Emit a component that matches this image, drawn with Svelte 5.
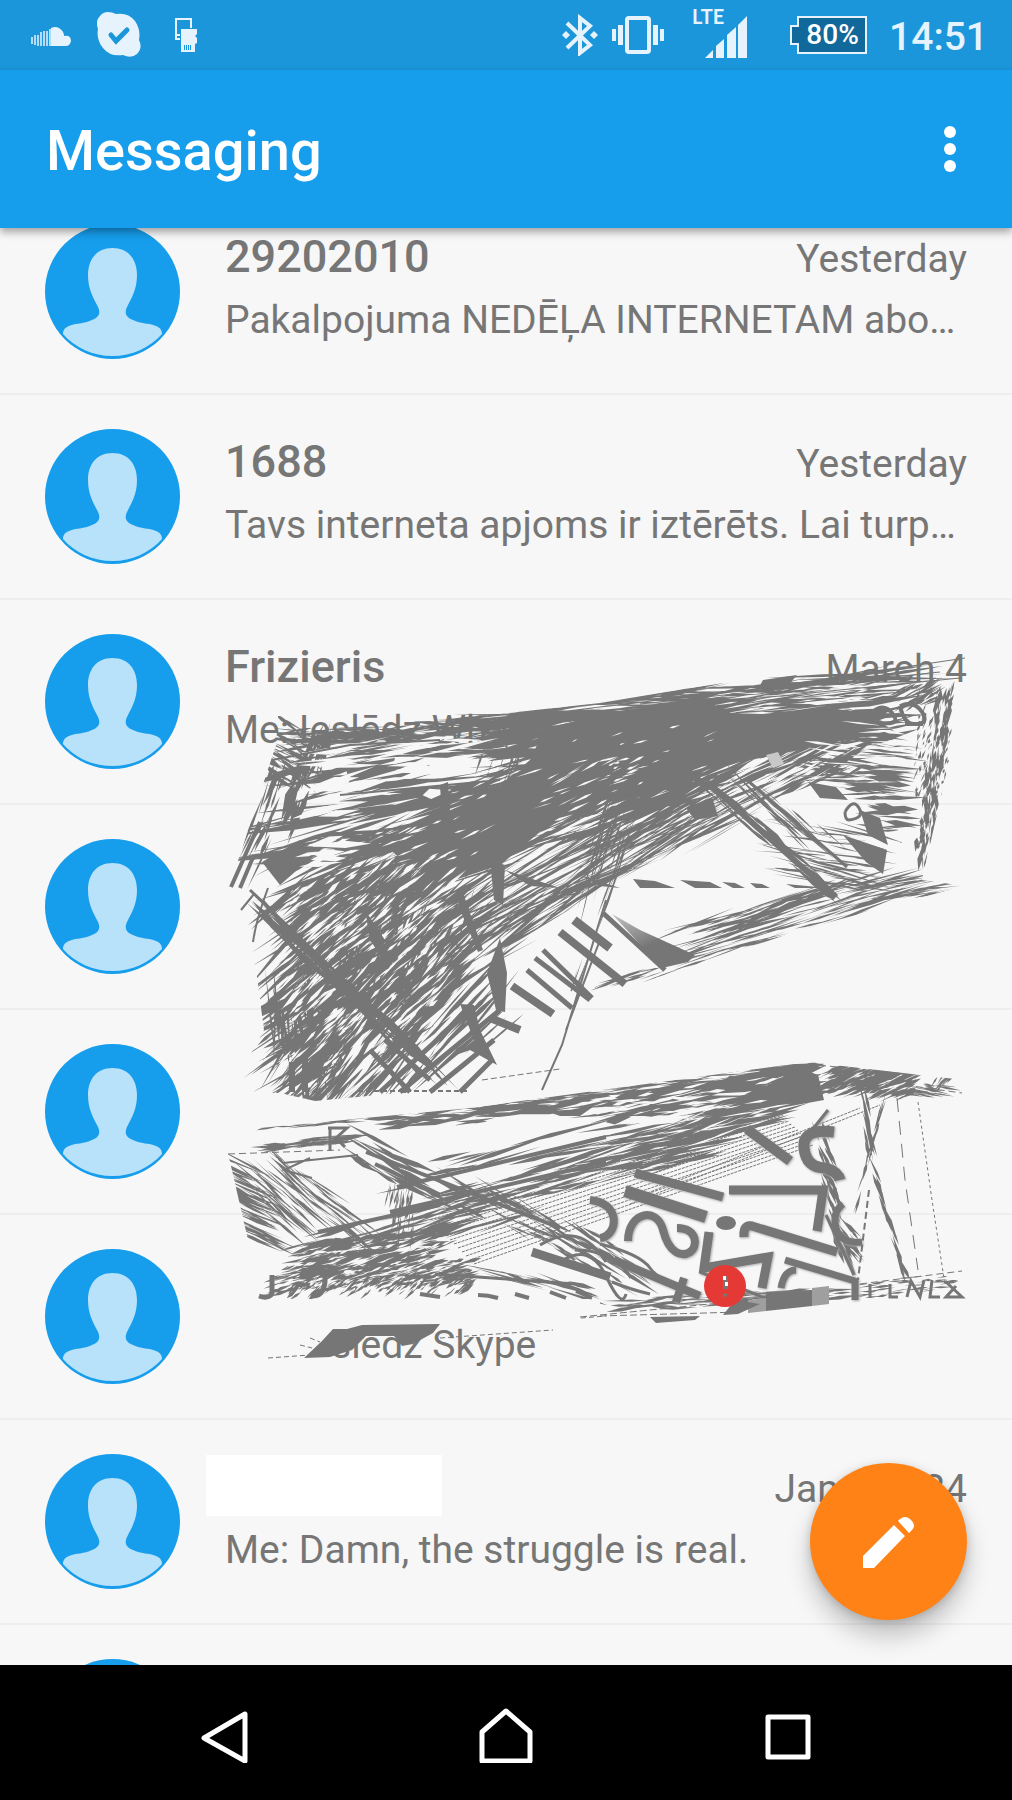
<script lang="ts">
  type Thread = { name?: string; date?: string; preview?: string; cut?: boolean };

  const threads: Thread[] = [
    { name: '29202010', date: 'Yesterday', preview: 'Pakalpojuma NEDĒĻA INTERNETAM abo…' },
    { name: '1688', date: 'Yesterday', preview: 'Tavs interneta apjoms ir iztērēts. Lai turp…' },
    { name: 'Frizieris', date: 'March 4', preview: 'Me: Ieslēdz What' },
    {},
    {},
    { preview: 'slēdz Skype', cut: true },
    { date: 'January 24', preview: 'Me: Damn, the struggle is real.' },
    {},
  ];

  // small seeded generator so the scribble is the same on every load
  function rng(seed: number) {
    return () => {
      seed = (seed * 1664525 + 1013904223) % 4294967296;
      return seed / 4294967296;
    };
  }

  // spine x1,y1,x2,y2 | spread | count | length | angle | thickness
  type Cluster = [number, number, number, number, number, number, number, number, number];

  function slivers(clusters: Cluster[], seed: number, jitter = 8) {
    const r = rng(seed);
    let d = '';
    for (const [x1, y1, x2, y2, spread, n, len, angle, thick] of clusters) {
      const sl = Math.hypot(x2 - x1, y2 - y1) || 1;
      const nx = -(y2 - y1) / sl;
      const ny = (x2 - x1) / sl;
      for (let i = 0; i < n; i++) {
        const t = r();
        const off = (r() - 0.5) * spread;
        const cx = x1 + (x2 - x1) * t + nx * off;
        const cy = y1 + (y2 - y1) * t + ny * off;
        const a = ((angle + (r() - 0.5) * 2 * jitter) * Math.PI) / 180;
        const h = (len * (0.4 + r() * 0.8)) / 2;
        const w = (thick * (0.3 + r())) / 2;
        const dx = Math.cos(a);
        const dy = Math.sin(a);
        const k = (r() - 0.5) * h;
        const pts = [
          [cx - dx * h, cy - dy * h],
          [cx + dx * k - dy * w, cy + dy * k + dx * w],
          [cx + dx * h, cy + dy * h],
          [cx + dx * k + dy * w, cy + dy * k - dx * w],
        ];
        d += 'M' + pts.map((p) => p[0].toFixed(1) + ' ' + p[1].toFixed(1)).join('L') + 'Z';
      }
    }
    return d;
  }

  const upperDark = slivers(
    [
      [285, 738, 480, 728, 14, 70, 60, -2, 3],
      [480, 722, 900, 676, 18, 120, 130, -6, 3],
      [500, 745, 880, 715, 50, 170, 110, -8, 6],
      [300, 750, 520, 740, 26, 30, 110, -6, 4],
      [290, 795, 480, 765, 60, 30, 110, -12, 6],
      [270, 845, 450, 815, 50, 34, 120, -10, 5],
      [440, 830, 700, 765, 80, 240, 110, -22, 5],
      [300, 880, 480, 850, 60, 110, 100, -24, 5],
      [290, 940, 480, 880, 90, 200, 90, -38, 4],
      [285, 1000, 460, 940, 90, 200, 90, -42, 4],
      [275, 1050, 400, 1000, 90, 150, 80, -34, 4],
      [290, 1075, 420, 1040, 60, 150, 80, -52, 4],
      [340, 1050, 480, 1000, 90, 70, 110, -48, 4],
      [470, 910, 690, 820, 50, 90, 150, -28, 2],
      [470, 960, 600, 870, 30, 40, 110, -35, 3],
      [610, 850, 740, 810, 40, 50, 110, -30, 2],
      [700, 790, 860, 750, 45, 70, 80, -26, 4],
      [810, 750, 905, 770, 60, 70, 60, 4, 3],
      [780, 850, 870, 860, 60, 44, 70, 11, 2],
      [870, 770, 890, 830, 30, 30, 40, 4, 5],
      [275, 740, 310, 770, 60, 44, 44, 32, 3],
      [275, 770, 250, 870, 20, 20, 50, -68, 4],
      [300, 770, 290, 830, 20, 16, 50, -66, 6],
      [310, 760, 330, 740, 20, 20, 50, -66, 3],
      [480, 760, 600, 770, 40, 24, 70, -74, 2],
      [350, 980, 440, 900, 90, 60, 90, -72, 4],
      [290, 1000, 320, 1080, 50, 44, 80, 84, 4],
    ],
    11,
  );

  const diagonals = slivers(
    [
      [270, 920, 430, 1070, 16, 40, 90, 44, 5],
      [690, 770, 830, 890, 12, 20, 60, 42, 5],
      [730, 780, 830, 850, 24, 24, 60, 42, 2],
      [620, 790, 600, 900, 30, 24, 110, -73, 2],
      [590, 950, 550, 1060, 10, 8, 80, -71, 2],
    ],
    5,
    4,
  );

  const flap = slivers(
    [
      [690, 940, 900, 880, 30, 70, 80, -18, 2],
      [610, 985, 880, 910, 10, 50, 60, -17, 2],
      [860, 890, 950, 886, 18, 34, 60, -10, 2],
      [730, 930, 820, 890, 12, 30, 60, -22, 3],
    ],
    17,
    5,
  );

  const column = slivers(
    [
      [945, 690, 922, 860, 16, 90, 20, -80, 4],
      [935, 690, 930, 800, 34, 110, 10, -72, 2],
      [952, 680, 920, 870, 4, 26, 20, -80, 2],
      [900, 700, 940, 690, 20, 40, 30, -30, 3],
    ],
    23,
    10,
  );

  const upperLight = slivers(
    [
      [310, 758, 470, 750, 24, 16, 80, -6, 5],
      [320, 800, 440, 775, 40, 16, 70, -12, 8],
      [290, 855, 350, 845, 36, 10, 60, -10, 8],
      [720, 705, 880, 690, 20, 30, 34, -6, 2],
      [560, 770, 720, 750, 60, 30, 14, -20, 2],
      [480, 800, 640, 790, 70, 40, 24, -24, 2],
      [400, 850, 480, 820, 60, 20, 20, -24, 2],
      [290, 930, 460, 880, 80, 90, 30, -38, 3],
      [290, 1000, 450, 960, 90, 90, 26, -44, 3],
      [280, 1060, 400, 1030, 70, 40, 26, -46, 3],
      [350, 1070, 450, 1020, 50, 18, 60, -46, 5],
      [740, 712, 860, 690, 20, 20, 50, -5, 2],
      [690, 790, 820, 770, 40, 34, 40, -24, 2],
      [820, 740, 900, 750, 50, 24, 40, 4, 3],
    ],
    31,
  );

  const lowerDark = slivers(
    [
      [265, 1125, 600, 1093, 10, 70, 60, -6, 2],
      [600, 1092, 800, 1066, 8, 34, 70, -8, 2],
      [370, 1125, 480, 1115, 14, 24, 50, -5, 4],
      [270, 1146, 350, 1138, 8, 26, 50, -6, 3],
      [480, 1112, 600, 1100, 12, 24, 60, -6, 5],
      [600, 1110, 760, 1088, 26, 44, 60, -10, 7],
      [720, 1095, 815, 1080, 30, 50, 50, -14, 8],
      [630, 1145, 770, 1110, 26, 70, 90, -15, 5],
      [390, 1180, 620, 1135, 30, 14, 100, -14, 4],
      [520, 1185, 700, 1140, 36, 54, 100, -15, 4],
      [400, 1215, 600, 1165, 24, 22, 100, -15, 3],
      [330, 1245, 520, 1200, 36, 46, 80, -17, 3],
      [300, 1262, 440, 1245, 36, 170, 36, -14, 4],
      [275, 1280, 470, 1272, 24, 220, 24, -14, 3],
      [290, 1290, 470, 1285, 14, 80, 18, -40, 3],
      [830, 1078, 910, 1085, 26, 200, 26, -22, 3],
      [900, 1090, 950, 1090, 10, 24, 24, 10, 2],
      [935, 1085, 958, 1070, 10, 14, 20, -52, 2],
      [620, 1306, 840, 1292, 12, 46, 60, -4, 3],
      [840, 1294, 950, 1280, 16, 40, 20, -5, 2],
    ],
    41,
    6,
  );

  const lowerDown = slivers(
    [
      [235, 1162, 265, 1245, 14, 70, 60, 25, 2],
      [268, 1170, 300, 1230, 40, 46, 60, 42, 2],
      [300, 1180, 370, 1240, 22, 30, 60, 38, 2],
      [365, 1150, 500, 1215, 30, 34, 60, 28, 4],
      [480, 1200, 600, 1250, 30, 30, 60, 28, 3],
      [560, 1230, 640, 1285, 34, 24, 46, 34, 3],
      [480, 1275, 600, 1292, 14, 16, 60, 16, 3],
      [395, 1180, 410, 1240, 24, 40, 24, 100, 2],
      [820, 1130, 845, 1260, 12, 40, 34, 66, 4],
      [850, 1225, 855, 1260, 10, 14, 30, 48, 4],
      [865, 1095, 870, 1160, 4, 14, 40, 76, 3],
      [872, 1165, 905, 1275, 4, 22, 30, 70, 3],
      [884, 1098, 855, 1210, 3, 16, 30, -75, 2],
    ],
    47,
    6,
  );

  const lowerLight = slivers(
    [
      [560, 1112, 720, 1098, 22, 34, 34, -8, 3],
      [600, 1140, 770, 1112, 30, 40, 40, -15, 2],
      [480, 1190, 680, 1150, 40, 34, 40, -15, 2],
      [290, 1268, 450, 1256, 40, 80, 14, -20, 2],
      [270, 1288, 460, 1284, 14, 50, 10, -40, 2],
    ],
    53,
  );

  // dotted bands that climb to the right
  const bands = Array.from({ length: 12 }, (_, i) => ({
    x1: 430 + i * 4,
    y1: 1220 + i * 4,
    x2: 780 + i * 3,
    y2: 1112 + i * 3,
  }));
</script>

<div class="screen">
  <div class="status-bar">
    <div class="status-left">
      <svg width="42" height="44" viewBox="0 0 42 44" aria-hidden="true">
        <path d="M21 33V15Q25 13 29 15 34 18 34 23 41 22 41 28 40 33 36 33Z" />
        <path
          d="M2 24v7M5 22v10M8 22v11M11 19v14M14 18v15M17 18v15M20 16v17"
          stroke="#b5dcf6"
          stroke-width="2"
        />
      </svg>
      <svg width="44" height="46" viewBox="0 0 44 46" aria-hidden="true">
        <path
          d="M11 0Q15 0 19 2 31 0 38 9 44 18 42 28 46 36 40 42 34 47 26 43 13 45 6 36-1 27 1 17-2 9 3 4 6 0 11 0Z"
        />
        <path d="M14 23l5 6 11-11" fill="none" stroke="#1b96db" stroke-width="5" stroke-linecap="round" />
      </svg>
      <svg width="44" height="36" viewBox="0 0 44 36" aria-hidden="true">
        <path d="M25 11V2H10v20h4M10 18h4" fill="none" stroke="#e6f3fc" stroke-width="2" />
        <path d="M15 12h16v5l-2 2 2 2v5l-2 1v8H15Z" />
        <path d="M18.500 28v5M20.500 28v5M22.500 28v5M24.500 28v5" stroke="#1b96db" />
      </svg>
    </div>

    <div class="status-right">
      <svg width="36" height="42" viewBox="0 0 36 42" aria-hidden="true">
        <path d="M5 9l23 22-10 8V4l10 8L5 34" fill="none" stroke="#e6f3fc" stroke-width="4" />
        <path d="M0 21l4-4 4 4-4 4ZM28 21l4-4 4 4-4 4Z" />
      </svg>
      <svg width="52" height="38" viewBox="0 0 52 38" aria-hidden="true">
        <rect x="15" y="2" width="22" height="34" rx="2" fill="none" stroke="#e6f3fc" stroke-width="4" />
        <path d="M0 13h4v12H0ZM6 9h5v20H6ZM41 9h5v20h-5ZM48 13h4v12h-4Z" />
      </svg>
      <div class="signal">
        <span class="lte">LTE</span>
        <svg width="44" height="42" viewBox="0 0 44 42" aria-hidden="true">
          <path d="M1 42l8-8v8ZM12 42V30l8-7v19ZM23 42V19l9-8v31ZM34 42V9l9-9v42Z" />
        </svg>
      </div>
      <div class="battery">
        <svg width="77" height="38" viewBox="0 0 77 38" aria-hidden="true">
          <path d="M8 1h68v36H8v-9H1V10h7Z" fill="#11699b" stroke="#e6f3fc" stroke-width="2" />
        </svg>
        <span class="percent">80%</span>
      </div>
      <span class="clock">14:51</span>
    </div>
  </div>

  <header class="app-bar">
    <h1>Messaging</h1>
    <button class="overflow" aria-label="More options">
      <svg width="24" height="50" viewBox="0 0 24 50" aria-hidden="true">
        <circle cx="12" cy="8" r="6" />
        <circle cx="12" cy="25" r="6" />
        <circle cx="12" cy="42" r="6" />
      </svg>
    </button>
  </header>

  <main class="content">
    <ul class="threads">
      {#each threads as thread}
        <li class="thread">
          <svg class="avatar" viewBox="0 0 135 135" aria-hidden="true">
            <circle cx="67.5" cy="67.5" r="67.5" fill="#169dec" />
            <path
              d="M67.5 24C52 24 43 35 43 51c0 14 5 22 9 30 4 7 3 12-5 15-8 4-16 3-23 6-5 2-6 5-6 8 12 14 30 22 49.500 22s37-8 49.500-22c0-3-1-6-6-8-7-3-15-2-23-6-8-3-9-8-5-15 4-8 9-16 9-30 0-16-9-27-24.500-27Z"
              fill="#b8e1fa"
            />
          </svg>
          <div class="body">
            <div class="top-line">
              <span class="name">{thread.name ?? ''}</span>
              <span class="date">{thread.date ?? ''}</span>
            </div>
            <p class="preview" class:cut={thread.cut}>{thread.preview ?? ''}</p>
          </div>
        </li>
      {/each}
    </ul>

    <svg class="scribble" viewBox="0 228 1012 1437" preserveAspectRatio="xMinYMin meet" aria-hidden="true">
      <defs>
        <linearGradient id="fade" x1="0" y1="0" x2="0.7" y2="1">
          <stop offset="0" stop-color="#767676" stop-opacity="0.4" />
          <stop offset="0.6" stop-color="#767676" />
        </linearGradient>
        <clipPath id="upper-edge">
          <path
            d="M278 716L500 714 600 703 762 676 966 655 955 735 922 880 964 886 800 930 600 998 545 985 500 1045 470 1093 400 1093 315 1101 280 1093 229 1093 264 1030 256 970 240 912 229 888 276 745Z"
          />
        </clipPath>
        <clipPath id="lower-edge">
          <path d="M260 1128L470 1108 808 1062 964 1080 964 1298 840 1306 600 1320 600 1299 255 1299 248 1240 228 1153Z" />
        </clipPath>
      </defs>

      <rect x="206" y="1455" width="236" height="61" fill="#fff" />

      <!-- upper mass -->
      <g clip-path="url(#upper-edge)">
        <path
          d="M545 728L610 714 740 698 810 704 870 715 900 735 850 738 800 750 740 762 700 782 650 792 590 812 540 832 500 865 440 885 410 865 390 850 430 815 500 785 530 760Z"
        />
        <path d="M345 765L395 758 388 782 350 785ZM262 862L300 840 320 850 280 885Z" />
        <path d={upperDark} />
        <path d={upperLight} class="paper" />
        <path d={diagonals} />
        <path d={flap} />
        <path d={column} />
      </g>
      <path d="M500 938L507 973 505 1012 496 1010 487 973ZM462 890L483 950 478 952 458 905ZM460 1004L474 1005 480 1030 497 1065 470 1050 456 1055 474 1040Z" />
      <path d="M440 785L448 782 450 810 442 818ZM490 860L505 865 503 905 494 900ZM365 910L385 940 380 955 370 940Z" />
      <path d="M763 680L797 675 787 687 758 689ZM843 835L887 850 883 874 866 862ZM808 782L836 787 848 800 820 798ZM860 810L880 818 888 845 868 835ZM686 808L712 797 718 816 695 820Z" />
      <path d="M766 755L778 752 784 764 773 768Z" fill="#c8c8c8" />
      <path
        d="M633 879L655 881 675 888 640 888ZM680 880L710 882 722 888 695 888ZM722 882L735 883 745 888 733 888ZM750 883L762 884 770 888 756 888ZM786 884L818 887 825 888 795 888Z"
      />
      <path d="M505 870L560 888 530 886ZM580 875L620 888 600 886Z" />
      <g class="line">
        <path d="M600 704L760 689 965 658M620 712L960 678M640 704L940 672" stroke-width="1" />
        <path d="M512 986L553 1014M490 1018L520 1030" stroke-width="8" />
        <path d="M527 970L572 1008M535 958L590 1000" stroke-width="5" />
        <path d="M543 950L592 998" stroke-width="5" />
        <path d="M560 932L625 984" stroke-width="8" />
        <path d="M574 920L610 948" stroke-width="9" />
        <path d="M603 913L665 970" stroke-width="5" />
        <path d="M707 782L757 827 836 897" stroke-width="6" />
        <path d="M747 780L847 867" stroke-width="3" />
        <path d="M260 822L231 887M254 855L240 888" stroke-width="4" />
        <path d="M254 894L241 910M268 888Q256 920 253 942" stroke-width="2" />
        <path d="M250 890L430 1062M262 900L420 1075" stroke-width="3" />
        <path d="M400 1092L500 1010M430 1092L494 1040M460 1092L492 1060M380 1092L470 1010M370 1050L410 1092M385 1040L430 1080" stroke-width="5" />
        <path d="M606 900L562 1045 542 1090M600 940L566 1030" stroke-width="2" />
        <path d="M440 740L350 745 272 760M500 780L340 795" stroke-width="2" />
        <path d="M292 1062V1092M305 1058V1092" stroke-width="6" />
        <path d="M845 812q8-14 14-4t-10 12q-4 0-4-8" stroke-width="3" />
        <path d="M870 715q12-14 22-2t-10 10q-8-2-12-8M900 706q14-6 22 6t-8 12q-10 0-14-18M905 724h18" stroke-width="4" />
      </g>
      <path d="M612 914L640 930 695 955 688 962 662 968Z" fill="url(#fade)" />
      <path d="M358 1091H470" class="line" stroke-width="2" stroke-dasharray="5 3" />
      <path d="M482 1080L560 1069" class="line" stroke-width="1" stroke-dasharray="6 3" />

      <!-- lower mass -->
      <g class="line" stroke-width="1" stroke-dasharray="3 1">
        {#each bands as b}
          <path d="M{b.x1} {b.y1}L{b.x2} {b.y2}" />
        {/each}
        <path d="M640 1196L860 1108M630 1204L880 1105" />
      </g>
      <g clip-path="url(#lower-edge)">
        <path d="M770 1085L800 1068 818 1075 824 1100 780 1108 740 1120 700 1130 740 1104Z" />
        <path d="M535 1107L600 1102 580 1116 560 1116Z" />
        <path d={lowerDark} />
        <path d={lowerLight} class="paper" />
        <path d={lowerDown} />
      </g>
      <g class="line">
        <path d="M228 1154L340 1150" stroke-width="1" stroke-dasharray="7 4" />
        <path d="M283 1163L358 1155M310 1158L284 1170 312 1178" stroke-width="2" />
        <path d="M397 1187L490 1165 606 1137M390 1212L606 1162M318 1232L440 1205" stroke-width="4" />
        <path d="M330 1127V1151M328 1128H347L336 1138 345 1147" stroke-width="3" />
        <path d="M272 1275V1294Q268 1299 259 1296M325 1275Q326 1297 312 1296" stroke-width="5" />
        <path d="M366 1152L560 1228M375 1164L440 1195" stroke-width="4" />
        <path d="M532 1252L610 1277" stroke-width="9" />
        <path d="M435 1274L575 1284" stroke-width="3" />
        <path d="M550 1292l16 6M576 1291l16 7M478 1295q10 0 20 3M515 1294l14 4M420 1294l20 3" stroke-width="4" />
      </g>
      <g class="line halo">
        <path d="M635 1173L723 1197" stroke-width="9" />
        <path d="M625 1191L706 1217" stroke-width="12" />
        <path d="M747 1129L790 1161" stroke-width="10" />
        <path d="M729 1190H823L817 1231" stroke-width="9" />
        <path d="M834 1132Q802 1128 804 1148T826 1168Q838 1172 840 1180" stroke-width="11" />
        <path d="M744 1237Q743 1224 752 1226L837 1252" stroke-width="9" />
        <path d="M709 1232L704 1268 768 1257 762 1288" stroke-width="9" />
        <path d="M781 1288Q784 1270 796 1270M785 1260L855 1281V1300" stroke-width="7" />
        <path d="M628 1241C628 1212 657 1206 663 1230S682 1257 690 1252 698 1228 677 1228" stroke-width="8" />
        <path d="M590 1200C622 1203 618 1236 600 1238" stroke-width="8" />
        <path d="M614 1260L700 1296M684 1278L676 1302" stroke-width="8" />
        <path d="M843 1204Q832 1212 836 1228T862 1242" stroke-width="7" />
        <path d="M826 1215L854 1275M828 1110L812 1130" stroke-width="3" />
        <path d="M700 1272L770 1300" stroke-width="3" />
      </g>
      <ellipse cx="726" cy="1223" rx="10" ry="7" />
      <path
        d="M540 1245Q580 1220 606 1262M560 1262q30-20 46 14t20 18M575 1250q40 0 56 28M600 1244q40 10 50 24t40 22M612 1282q20 8 38 12"
        class="line"
        stroke-width="3"
      />
      <path d="M766 1292L812 1290V1306L766 1311Z" />
      <path d="M812 1288L829 1286V1304L812 1306ZM748 1300L766 1298V1311L748 1313Z" fill="#9f9f9f" />
      <path d="M650 1317L700 1316 695 1320 656 1323ZM735 1300L760 1304 738 1314 723 1315Z" />
      <path d="M580 1317L730 1302M600 1316L740 1312" class="line" stroke-width="1" stroke-dasharray="7 3" />
      <g class="line" stroke-width="1" stroke-dasharray="7 4">
        <path d="M897 1098L905 1180 918 1270" stroke-dasharray="14 9" />
        <path d="M918 1102L932 1200 945 1285" stroke-dasharray="3 3" />
        <path d="M869 1190L858 1280" stroke-width="2" />
        <path d="M808 1064L905 1074M905 1085L962 1093M860 1284L962 1271" />
      </g>
      <path
        d="M907 1297L911 1281 920 1297 924 1280M932 1280L930 1297H940M945 1281L962 1297H946L956 1286M890 1284V1297H898M870 1284V1297"
        class="line"
        stroke-width="3"
      />

      <!-- smear on the last hidden thread -->
      <path d="M304 1358L322 1341 333 1329 347 1329 362 1325 440 1324 433 1333 413 1344 402 1346 394 1336 366 1336 352 1350 330 1357Z" />
      <path d="M268 1358L310 1355M440 1338L553 1330M581 1318L606 1316M300 1345l12 3M310 1338l10 4" class="line" stroke-width="1" stroke-dasharray="5 3" />

      <circle cx="725" cy="1286" r="21" fill="#e53935" />
      <path d="M723 1276h5v13h-5Z" />
      <path d="M723 1276h3v4h-3ZM725 1282h3v4h-3Z" fill="#fff" />
      <circle cx="725" cy="1295" r="2" />
    </svg>

    <button class="fab" aria-label="New message">
      <svg viewBox="0 0 157 157" aria-hidden="true">
        <path d="M53 93L84 62 95 73 64 105H53ZM88 58L90 56Q95 52 100 56L102 58Q106 63 102 67L99 70Z" />
      </svg>
    </button>
  </main>

  <nav class="nav-bar">
    <button aria-label="Back">
      <svg width="60" height="60" viewBox="0 0 60 60"><path d="M11 35L52 11V58Z" /></svg>
    </button>
    <button aria-label="Home">
      <svg width="60" height="60" viewBox="0 0 60 60"><path d="M6 29L30 8 54 29V58H6Z" /></svg>
    </button>
    <button aria-label="Recent apps">
      <svg width="60" height="60" viewBox="0 0 60 60"><path d="M9 14H49V54H9Z" /></svg>
    </button>
  </nav>
</div>

<style>
  :global(body) {
    margin: 0;
    background: #000;
  }

  button {
    border: none;
    padding: 0;
    background: none;
    cursor: pointer;
  }

  svg {
    display: block;
    flex: none;
  }

  .screen {
    display: flex;
    flex-direction: column;
    height: 100vh;
    font-family: Roboto, 'Liberation Sans', sans-serif;
    color: #767676;
  }

  .status-bar {
    display: flex;
    flex: none;
    justify-content: space-between;
    align-items: center;
    height: 70px;
    padding: 0 24px 0 30px;
    box-sizing: border-box;
    background: #1b96db;
    color: #e6f3fc;
    fill: #e6f3fc;
  }

  .status-left {
    display: flex;
    align-items: center;
    gap: 25px;
  }

  .status-right {
    display: flex;
    align-items: center;
    gap: 14px;
  }

  .signal {
    width: 84px;
    height: 50px;
    padding-left: 14px;
    position: relative;
  }

  .signal svg {
    margin: 6px 0 0 12px;
  }

  .lte {
    position: absolute;
    top: -4px;
    left: 14px;
    font-family: Lato, sans-serif;
    font-size: 20px;
    line-height: 20px;
    font-weight: 700;
  }

  .battery {
    position: relative;
  }

  .percent {
    position: absolute;
    inset: 0 0 0 8px;
    font-size: 28px;
    line-height: 38px;
    font-weight: 500;
    text-align: center;
    color: #fff;
  }

  .clock {
    padding: 4px 0 0 8px;
    font-size: 39px;
    line-height: 46px;
    font-weight: 500;
  }

  .app-bar {
    display: flex;
    flex: none;
    justify-content: space-between;
    align-items: center;
    height: 158px;
    padding: 0 50px 0 46px;
    box-sizing: border-box;
    background: #169dec;
    box-shadow: 0 4px 8px rgba(0, 0, 0, 0.35);
    position: relative;
    z-index: 2;
  }

  h1 {
    margin: 0;
    padding-top: 4px;
    font-size: 56px;
    line-height: 66px;
    font-weight: 500;
    color: #fff;
  }

  .overflow {
    fill: #fff;
  }

  .content {
    flex: 1;
    min-height: 0;
    overflow: hidden;
    position: relative;
    background: #f7f7f7;
  }

  /* the list is scrolled a little, so the first row slips under the app bar */
  .threads {
    list-style: none;
    margin: -38px 0 0;
    padding: 0;
  }

  .thread {
    display: flex;
    gap: 45px;
    height: 205px;
    padding: 34px 45px 0;
    box-sizing: border-box;
    border-bottom: 2px solid #eee;
  }

  .avatar {
    width: 135px;
    height: 135px;
  }

  .body {
    flex: 1;
    min-width: 0;
    padding-top: 7px;
  }

  .top-line {
    display: flex;
    justify-content: space-between;
    align-items: flex-end;
    height: 52px;
    margin-bottom: 14px;
  }

  .name {
    font-size: 45px;
    line-height: 52px;
    font-weight: 500;
  }

  .date {
    font-size: 39px;
    line-height: 48px;
  }

  .preview {
    margin: 0;
    font-size: 39px;
    line-height: 46px;
    white-space: nowrap;
  }

  .preview.cut {
    padding-left: 106px;
  }

  .scribble {
    position: absolute;
    top: 0;
    left: 0;
    width: 100%;
    fill: #767676;
    pointer-events: none;
  }

  .paper {
    fill: #f7f7f7;
  }

  .line {
    fill: none;
    stroke: #767676;
  }

  .halo {
    filter: drop-shadow(1px 1px 1px #a8a8a8);
  }

  .fab {
    position: absolute;
    right: 45px;
    bottom: 45px;
    width: 157px;
    height: 157px;
    border-radius: 50%;
    background: #ff8216;
    fill: #fff;
    box-shadow:
      0 16px 24px rgba(0, 0, 0, 0.22),
      0 2px 10px rgba(0, 0, 0, 0.16);
  }

  .nav-bar {
    display: flex;
    flex: none;
    justify-content: center;
    height: 135px;
    background: #000;
  }

  .nav-bar button {
    display: flex;
    justify-content: center;
    align-items: center;
    width: 28%;
  }

  .nav-bar path {
    fill: none;
    stroke: #fff;
    stroke-width: 5;
    stroke-linejoin: round;
  }
</style>
